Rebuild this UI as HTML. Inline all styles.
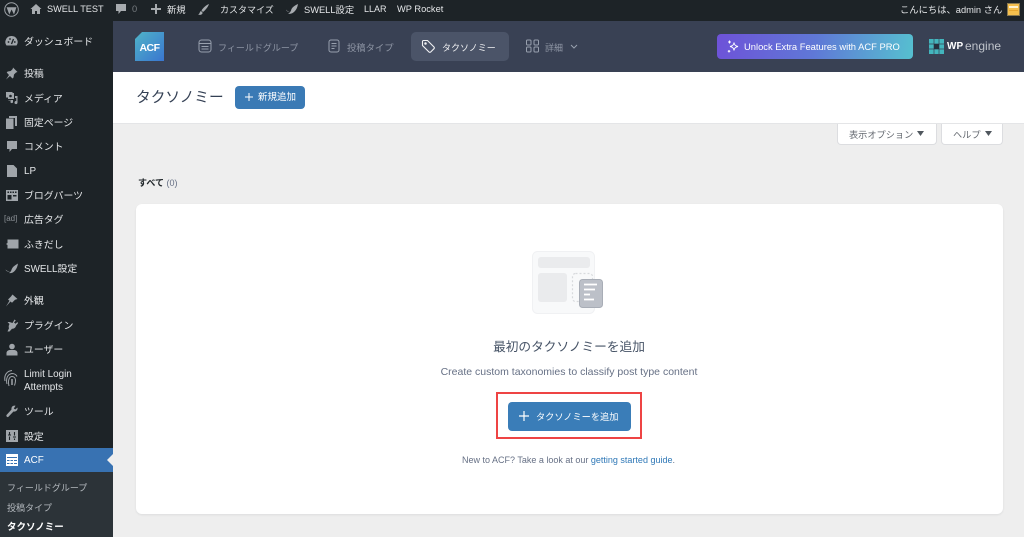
<!DOCTYPE html>
<html lang="ja"><head><meta charset="utf-8"><title>タクソノミー</title>
<style>
*{box-sizing:border-box}
html,body{margin:0;padding:0;width:1024px;height:537px;overflow:hidden;background:#eee;font-family:"Liberation Sans","Noto Sans CJK JP",sans-serif}
.a{position:absolute;white-space:nowrap}
#bar{left:0;top:0;width:1024px;height:21px;background:#1d2327}
#side{left:0;top:21px;width:113px;height:516px;background:#1d2327}
.t{color:#e4e6e8;font-size:9.3px;line-height:12px}
.m{color:#e4e6e8;font-size:9.900px;line-height:14px;left:24px}
.i{position:absolute;overflow:visible}
.nav{color:#8f96a5;font-size:9px;line-height:12px}
svg{display:block}
</style></head><body>
<div class="a" id="bar"></div>
<div class="a" id="side"></div>

<!-- top bar -->
<svg class="i" style="left:4px;top:2px" width="15" height="15" viewBox="0 0 15 15"><circle cx="7.5" cy="7.5" r="6.8" fill="none" stroke="#9ea3a8" stroke-width="1"/><path d="M2.6 5.2h9.8L10 12.5 7.6 7.5 5.3 12.5z" fill="#9ea3a8"/></svg>
<svg class="i" style="left:30px;top:3px" width="12" height="12" viewBox="0 0 12 12"><path d="M6 1L.5 6H2v5h3V8h2v3h3V6h1.500z" fill="#a7abaf"/></svg>
<div class="a t" style="left:47px;top:3px;font-size:9.200px">SWELL TEST</div>
<svg class="i" style="left:115px;top:3px" width="12" height="12" viewBox="0 0 12 12"><path d="M1 1h10v7H6l-2.500 3V8H1z" fill="#a7abaf"/></svg>
<div class="a t" style="left:132px;top:3px;color:#777c80">0</div>
<svg class="i" style="left:151px;top:4px" width="10" height="10" viewBox="0 0 10 10"><path d="M4 0h2v4h4v2H6v4H4V6H0V4h4z" fill="#a7abaf"/></svg>
<div class="a t" style="left:167px;top:4px">新規</div>
<svg class="i" style="left:197px;top:3px" width="13" height="13" viewBox="0 0 13 13"><path d="M12 1C9 2 6 5 4.500 7.500L6 9C8.500 7 11 4 12 1zM4 8C2.500 8.500 3 11 1 11.500 3 12.500 6 11.500 5.500 9.500z" fill="#a7abaf"/></svg>
<div class="a t" style="left:220px;top:4px;font-size:9px">カスタマイズ</div>
<svg class="i" style="left:285px;top:3px" width="14" height="12" viewBox="0 0 14 12"><path d="M13 1C12 8 7 12 3 10.500 5 10 6 8 6.500 6 8 3.500 10.500 2 13 1zM1 6.500C1.500 8.500 3 9 4.500 8.500 3.500 8.500 2 8 1 6.500z" fill="#a7abaf"/></svg>
<div class="a t" style="left:304px;top:4px">SWELL設定</div>
<div class="a t" style="left:364px;top:3px;font-size:9px">LLAR</div>
<div class="a t" style="left:397px;top:3px">WP Rocket</div>
<div class="a t" style="left:900px;top:4px">こんにちは、admin さん</div>
<div class="a" style="left:1007px;top:3px;width:13px;height:13px;background:#f5c04e;border:1px solid #8a7a50"><div style="margin:2px 1px 0;height:2px;background:#fff3d0"></div><div style="margin:2px 1px 0;height:1px;background:#e8a830"></div></div>

<!-- sidebar icons -->
<svg class="i" style="left:5px;top:35px" width="13" height="12" viewBox="0 0 13 12"><path d="M6.500 1A6 6 0 0 0 1.500 10.500h10A6 6 0 0 0 6.500 1z" fill="#a0a5aa"/><path d="M6.500 9L8.500 4" stroke="#1d2327" stroke-width="1.300"/><circle cx="3.500" cy="7" r=".9" fill="#1d2327"/><circle cx="5" cy="4" r=".9" fill="#1d2327"/><circle cx="9.800" cy="7" r=".9" fill="#1d2327"/></svg>
<svg class="i" style="left:5px;top:67px" width="13" height="13" viewBox="0 0 13 13"><path d="M8 .5l4.500 4.500-1.500.5-2 2-.5 3-1 1-2.500-2.500L1 12.500 4 8 1.700 5.500l1-1 3-.5 2-2z" fill="#a0a5aa"/></svg>
<svg class="i" style="left:5px;top:91px" width="13" height="14" viewBox="0 0 13 14"><path d="M1 1h6.500v1H9v6H3V6.500H1z" fill="#a0a5aa"/><circle cx="5.500" cy="5" r="1.300" fill="#1d2327"/><path d="M10 5h2.500v6.500a1.500 1.500 0 1 1-1.200-1.400V7H10zM3.500 9H8v1.500a1.300 1.300 0 1 1-1-1H3.500z" fill="#a0a5aa"/></svg>
<svg class="i" style="left:6px;top:116px" width="11" height="13" viewBox="0 0 11 13"><path d="M3 0h8v10H9V2H3z" fill="#a0a5aa"/><path d="M0 2.500h7.500V13H0z" fill="#a0a5aa"/></svg>
<svg class="i" style="left:6px;top:140px" width="12" height="13" viewBox="0 0 12 13"><path d="M1 1h10v8H6l-2.500 3V9H1z" fill="#a0a5aa"/></svg>
<svg class="i" style="left:7px;top:165px" width="10" height="12" viewBox="0 0 10 12"><path d="M0 0h6.500L10 3.500V12H0z" fill="#a0a5aa"/></svg>
<svg class="i" style="left:6px;top:190px" width="12" height="11" viewBox="0 0 12 11"><path d="M0 0h12v11H0z" fill="#a0a5aa"/><path d="M1.500 1.500h1.500V3H1.500zM4 1.500h1.500V3H4zM6.500 1.500H8V3H6.500zM9 1.500h1.500V3H9zM1.500 5H5.500V9.500H1.500zM7 5h3.500v1.500H7z" fill="#1d2327"/></svg>
<div class="a" style="left:4px;top:214px;color:#8a8f94;font-size:8px;line-height:10px">[ad]</div>
<svg class="i" style="left:5px;top:239px" width="14" height="10" viewBox="0 0 14 10"><path d="M2.500 0.500h11v9h-11V6L1 5l1.500-1z" fill="#a0a5aa"/></svg>
<svg class="i" style="left:5px;top:263px" width="14" height="11" viewBox="0 0 14 11"><path d="M13 .5C12 7 8 11 4 10c1.500-.8 2.300-2.300 2.800-4C8 3.500 10.500 2 13 .5zM.5 6.500C1 8.300 3 9 4.800 8.300 3.500 8.300 1.800 8 .5 6.500z" fill="#a0a5aa"/></svg>
<svg class="i" style="left:5px;top:294px" width="13" height="13" viewBox="0 0 13 13"><path d="M7.500.5l5 4.500-2.500.8-3 3L5.500 7.500 1 12.500 4.500 6.800 3 5.500l3-3z" fill="#a0a5aa"/></svg>
<svg class="i" style="left:6px;top:319px" width="12" height="13" viewBox="0 0 12 13"><path d="M8.500.5l1.300 1-1.800 2 1.500 1.300 2-1.800 .5 1.300-2 2.500c-.5 2-2 3-4 3L3.500 12.500H1.500l1.500-3.200C2.500 8 2.500 6.500 3.500 5L1.500 3h2l3 1z" fill="#a0a5aa"/></svg>
<svg class="i" style="left:6px;top:343px" width="12" height="13" viewBox="0 0 12 13"><circle cx="6" cy="3.500" r="2.800" fill="#a0a5aa"/><path d="M.5 12.500V10c0-2 2-3 3.500-3h4c1.500 0 3.500 1 3.500 3v2.500z" fill="#a0a5aa"/></svg>
<svg class="i" style="left:3px;top:369px" width="15" height="20" viewBox="0 0 15 20" fill="none" stroke="#a0a5aa"><path d="M2 12C.8 6 4 2 9 1.500" stroke-width="1"/><path d="M4 15C2.500 9 5 5 9 4.500c2.500 0 4 1 5 3" stroke-width="1"/><path d="M6 17C4.500 11 6.500 7.500 9 7.500s3.500 2 3.500 4c0 2-.5 3.500-1 5" stroke-width="1"/><path d="M9 10v6" stroke-width="1.500"/></svg>
<svg class="i" style="left:6px;top:405px" width="12" height="13" viewBox="0 0 12 13"><path d="M11.500 2.500L9.300 4.500 7.800 3.500 9.500.8C7.500 0 5 1.500 5.500 4.500L.5 10c-.5 1 .5 2.500 1.700 2l5.300-5.500c3 .5 4.500-2 4-4z" fill="#a0a5aa"/></svg>
<svg class="i" style="left:6px;top:430px" width="12" height="12" viewBox="0 0 12 12"><path d="M0 0h12v12H0z" fill="#a0a5aa"/><path d="M3.500 2v3M2 5h3M3.500 6.500V10M8.500 2v3.500M7 7h3M8.500 8.500V10" stroke="#1d2327" stroke-width="1.100"/></svg>

<!-- sidebar labels -->
<div class="a m" style="top:36px">ダッシュボード</div>
<div class="a m" style="top:68px">投稿</div>
<div class="a m" style="top:93px">メディア</div>
<div class="a m" style="top:117px">固定ページ</div>
<div class="a m" style="top:141px">コメント</div>
<div class="a m" style="top:165px">LP</div>
<div class="a m" style="top:190px">ブログパーツ</div>
<div class="a m" style="top:214px">広告タグ</div>
<div class="a m" style="top:239px">ふきだし</div>
<div class="a m" style="top:263px">SWELL設定</div>
<div class="a m" style="top:295px">外観</div>
<div class="a m" style="top:320px">プラグイン</div>
<div class="a m" style="top:344px">ユーザー</div>
<div class="a m" style="top:368px">Limit Login</div>
<div class="a m" style="top:381px">Attempts</div>
<div class="a m" style="top:406px">ツール</div>
<div class="a m" style="top:431px">設定</div>

<div class="a" style="left:0;top:448px;width:113px;height:24px;background:#3872b2"></div>
<svg class="i" style="left:6px;top:454px" width="12" height="12" viewBox="0 0 12 12"><path d="M0 0h12v12H0z" fill="#fff"/><path d="M1 3h10v1H1zM1 6h2.500v1H1zM4.500 6h2.500v1H4.500zM8 6h3v1H8zM1 9h2.500v1H1zM4.500 9h2.500v1H4.500zM8 9h3v1H8z" fill="#3872b2"/></svg>
<div class="a m" style="top:454px;color:#fff">ACF</div>
<svg class="i" style="left:107px;top:454px" width="6" height="12" viewBox="0 0 6 12"><path d="M6 0v12L0 6z" fill="#eee"/></svg>
<div class="a" style="left:0;top:472px;width:113px;height:65px;background:#2c3338"></div>
<div class="a" style="left:7px;top:482px;color:#b4b9be;font-size:9px;line-height:12px">フィールドグループ</div>
<div class="a" style="left:7px;top:502px;color:#b4b9be;font-size:9px;line-height:12px">投稿タイプ</div>
<div class="a" style="left:7px;top:522px;color:#fff;font-size:9.500px;line-height:12px;font-weight:700">タクソノミー</div>

<!-- ACF header -->
<div class="a" style="left:113px;top:21px;width:911px;height:51px;background:#394154"></div>
<svg class="i" style="left:135px;top:32px" width="29" height="29" viewBox="0 0 29 29"><defs><linearGradient id="g1" x1="0" y1="0" x2="1" y2="1"><stop offset="0" stop-color="#4fb3c8"/><stop offset="1" stop-color="#3a76d0"/></linearGradient></defs><path d="M7 0H29V29H0V7z" fill="url(#g1)"/><text x="14.500" y="19" font-family="Liberation Sans" font-size="10.500" font-weight="700" fill="#fff" text-anchor="middle" letter-spacing="-.5">ACF</text></svg>

<svg class="i" style="left:198px;top:39px" width="14" height="14" viewBox="0 0 14 14" fill="none" stroke="#98a0ae" stroke-width="1"><rect x="1" y="1" width="12" height="12" rx="2.500"/><path d="M1 4.500h12M3.500 7.500h7M3.500 10h7"/></svg>
<div class="a nav" style="left:218px;top:42px">フィールドグループ</div>
<svg class="i" style="left:328px;top:39px" width="12" height="14" viewBox="0 0 12 14" fill="none" stroke="#98a0ae" stroke-width="1"><rect x="1" y="1" width="10" height="12" rx="2"/><path d="M3.500 4.500h5M3.500 7h5M3.500 9.500h3"/></svg>
<div class="a nav" style="left:347px;top:42px;font-size:9.300px">投稿タイプ</div>
<div class="a" style="left:411px;top:32px;width:98px;height:29px;background:#4b5468;border-radius:5px"></div>
<svg class="i" style="left:421px;top:39px" width="15" height="15" viewBox="0 0 15 15" fill="none" stroke="#f0f1f3" stroke-width="1.100"><path d="M1.500 2.500a1 1 0 0 1 1-1h4l6.500 6.500a1.200 1.200 0 0 1 0 1.700l-3.300 3.300a1.200 1.200 0 0 1-1.700 0L1.500 6.500z"/><circle cx="4.500" cy="4.500" r=".7" fill="#f0f1f3"/></svg>
<div class="a nav" style="left:442px;top:42px;color:#f0f1f3">タクソノミー</div>
<svg class="i" style="left:526px;top:39px" width="13" height="14" viewBox="0 0 13 14" fill="none" stroke="#98a0ae" stroke-width="1"><rect x=".5" y="1" width="4.500" height="5" rx="1"/><rect x="8" y="1" width="4.500" height="5" rx="1"/><rect x=".5" y="8" width="4.500" height="5" rx="1"/><rect x="8" y="8" width="4.500" height="5" rx="1"/></svg>
<div class="a nav" style="left:545px;top:42px">詳細</div>
<svg class="i" style="left:570px;top:44px" width="8" height="5" viewBox="0 0 8 5" fill="none" stroke="#98a0ae" stroke-width="1"><path d="M1 1l3 3 3-3"/></svg>

<div class="a" style="left:717px;top:34px;width:196px;height:25px;border-radius:4px;background:linear-gradient(100deg,#6e52d8 0%,#5f78d6 50%,#56c0d0 100%)"></div>
<svg class="i" style="left:727px;top:40px" width="13" height="13" viewBox="0 0 13 13" fill="none" stroke="#fff" stroke-width="1"><path d="M7 2.500c.3 2.500 1.300 3.500 4 4-2.700.5-3.700 1.500-4 4-.3-2.500-1.300-3.500-4-4 2.700-.5 3.700-1.500 4-4z"/><path d="M2.500.5v3M1 2h3M2 10v2.500M.8 11.300h2.500"/></svg>
<div class="a" style="left:744px;top:41px;color:#fff;font-size:9.400px;line-height:12px">Unlock Extra Features with ACF PRO</div>
<svg class="i" style="left:929px;top:39px" width="15" height="15" viewBox="0 0 15 15"><path d="M0 0h15v15H0z" fill="#43b5bd"/><path d="M5 0v15M10 0v15M0 5h15M0 10h15" stroke="#394154" stroke-width=".7"/><path d="M5 5h5v5H5z" fill="#26303f"/></svg>
<div class="a" style="left:947px;top:40px;color:#fff;font-size:10px;line-height:13px;font-weight:700">WP</div>
<div class="a" style="left:965px;top:39px;color:#c0c4cb;font-size:12px;line-height:14px">engine</div>

<!-- page title bar -->
<div class="a" style="left:113px;top:72px;width:911px;height:52px;background:#fff;border-bottom:1px solid #e4e5e7"></div>
<div class="a" style="left:136px;top:87px;color:#344054;font-size:14.700px;line-height:22px">タクソノミー</div>
<div class="a" style="left:235px;top:86px;width:70px;height:23px;background:#3a7ab5;border-radius:4px"></div>
<svg class="i" style="left:245px;top:93px" width="8" height="8" viewBox="0 0 8 8"><path d="M4 0v8M0 4h8" stroke="#fff" stroke-width="1"/></svg>
<div class="a" style="left:258px;top:92px;color:#fff;font-size:9.500px;line-height:12px">新規追加</div>

<!-- screen meta -->
<div class="a" style="left:837px;top:124px;width:100px;height:21px;background:#fff;border:1px solid #dcdde0;border-top:0;border-radius:0 0 4px 4px"></div>
<div class="a" style="left:849px;top:129px;color:#646970;font-size:9.200px;line-height:12px">表示オプション</div>
<svg class="i" style="left:917px;top:131px" width="8" height="5"><path d="M0 0h7L3.500 5z" fill="#50575e"/></svg>
<div class="a" style="left:941px;top:124px;width:62px;height:21px;background:#fff;border:1px solid #dcdde0;border-top:0;border-radius:0 0 4px 4px"></div>
<div class="a" style="left:953px;top:129px;color:#646970;font-size:9.200px;line-height:12px">ヘルプ</div>
<svg class="i" style="left:985px;top:131px" width="8" height="5"><path d="M0 0h7L3.500 5z" fill="#50575e"/></svg>

<div class="a" style="left:138px;top:177px;color:#1d2327;font-size:9px;line-height:12px;font-weight:700">すべて <span style="font-weight:400;color:#667085">(0)</span></div>

<!-- card -->
<div class="a" style="left:136px;top:204px;width:867px;height:310px;background:#fff;border-radius:6px;box-shadow:0 1px 2px rgba(16,24,40,.08)"></div>
<svg class="i" style="left:532px;top:251px" width="72" height="64" viewBox="0 0 72 64">
<rect x=".5" y=".5" width="62" height="62" rx="5" fill="#f8f9fa" stroke="#f0f1f3"/>
<rect x="6" y="6" width="52" height="11" rx="3" fill="#eaebed"/>
<rect x="6" y="22" width="29" height="29" rx="3" fill="#eaebed"/>
<rect x="40.500" y="22.500" width="20" height="28" rx="3" fill="none" stroke="#d8dadd" stroke-width="1.200" stroke-dasharray="2 2"/>
<rect x="47.500" y="28.500" width="23" height="28" rx="3" fill="#bcc0c8" stroke="#a8adb6"/>
<path d="M52 33.500h13M52 38.500h11M52 43.500h6M52 48.500h10" stroke="#fff" stroke-width="1.800"/>
</svg>
<div class="a" style="left:0;width:1138px;top:338px;text-align:center;color:#475467;font-size:12.700px;line-height:18px">最初のタクソノミーを追加</div>
<div class="a" style="left:0;width:1138px;top:366px;text-align:center;color:#667085;font-size:10.500px;line-height:13px">Create custom taxonomies to classify post type content</div>

<div class="a" style="left:496px;top:392px;width:146px;height:47px;border:2px solid #ee4444"></div>
<div class="a" style="left:508px;top:402px;width:123px;height:29px;background:#3a7db8;border-radius:4px"></div>
<svg class="i" style="left:519px;top:411px" width="10" height="10" viewBox="0 0 10 10"><path d="M5 0v10M0 5h10" stroke="#fff" stroke-width="1.200"/></svg>
<div class="a" style="left:536px;top:411px;color:#fff;font-size:9.200px;line-height:12px">タクソノミーを追加</div>

<div class="a" style="left:462px;top:454px;color:#667085;font-size:9px;line-height:12px">New to ACF? Take a look at our <span style="color:#2f78b7">getting started guide</span>.</div>
</body></html>
